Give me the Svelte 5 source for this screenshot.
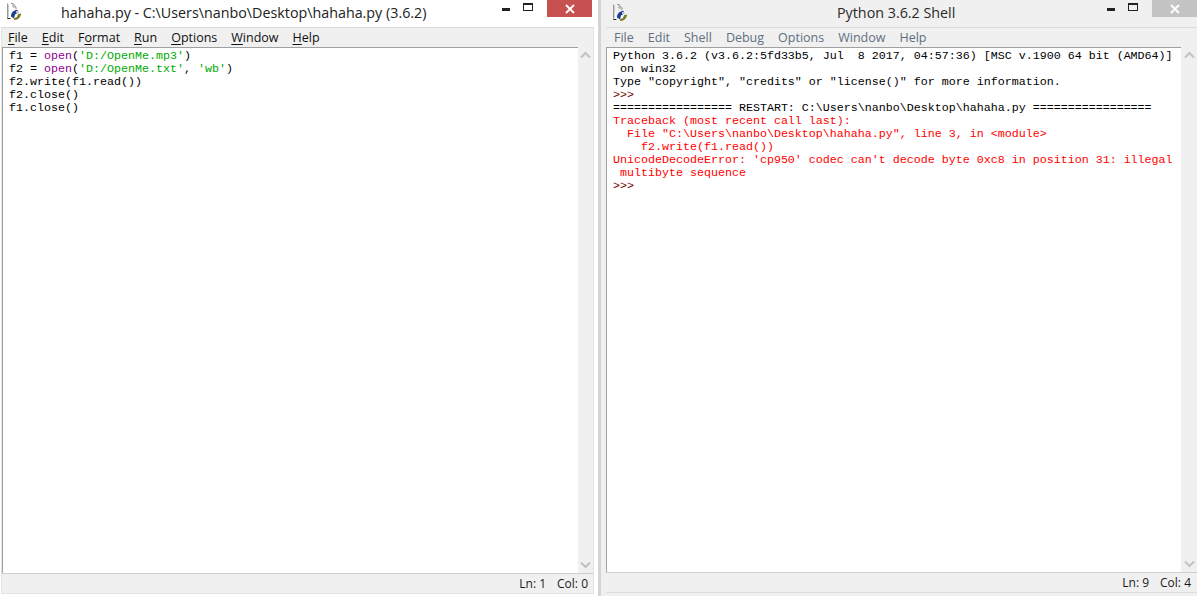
<script>
  const leftMenu = [['F','ile'],['E','dit'],['','F','o','rmat'],['R','un'],['O','ptions'],['W','indow'],['H','elp']];
  const rightMenu = ['File','Edit','Shell','Debug','Options','Window','Help'];
</script>

{#snippet icon()}
  <svg class="icon" width="20" height="20" viewBox="0 0 20 20" aria-hidden="true">
    <path d="M5.5 1.5V16.5H9M9 1.5H11L14 5V7.5M11 1.5V5H14" fill="#fff" stroke="#9a9a9a" stroke-width="1"/>
    <path d="M5.5 16.5H8" stroke="#222" fill="none"/>
    <path d="M6.5 2.5V15" stroke="#c9c9c9" fill="none"/>
    <circle cx="14" cy="13" r="5" fill="#fff"/>
    <path d="M9 14.5C9 10.5 11.5 8 15.5 8L16.5 10.5L13 12.5L12 16.5Z" fill="#1d3f8f"/>
    <path d="M19 11.5C19 15 16.5 18 12.5 18L11.5 16.5L15 15L16 12Z" fill="#7d7a21"/>
    <circle cx="15" cy="10" r="1" fill="#f3f3f3"/>
  </svg>
{/snippet}

{#snippet controls(cls)}
  <div class="controls {cls}">
    <span class="min"></span>
    <span class="max"></span>
    <span class="close">
      <svg width="10" height="10" viewBox="0 0 10 10" aria-hidden="true"><path d="M1 1L9 9M9 1L1 9" stroke="#fff" stroke-width="1.8"/></svg>
    </span>
  </div>
{/snippet}

{#snippet scrollbar()}
  <div class="scroll">
    <svg width="11" height="8" viewBox="0 0 11 8" aria-hidden="true"><path d="M1 6.5L5.5 2L10 6.5" fill="none" stroke="#c2c2c2" stroke-width="2"/></svg>
    <svg width="11" height="8" viewBox="0 0 11 8" aria-hidden="true"><path d="M1 1.5L5.5 6L10 1.5" fill="none" stroke="#c2c2c2" stroke-width="2"/></svg>
  </div>
{/snippet}

<div class="screen">
  <section class="win left">
    <header class="title">
      {@render icon()}
      <h1>hahaha.py - C:\Users\nanbo\Desktop\hahaha.py (3.6.2)</h1>
      {@render controls('active')}
    </header>
    <div class="frame">
      <nav class="menu">
        <span><u>F</u>ile</span>
        <span><u>E</u>dit</span>
        <span>F<u>o</u>rmat</span>
        <span><u>R</u>un</span>
        <span><u>O</u>ptions</span>
        <span><u>W</u>indow</span>
        <span><u>H</u>elp</span>
      </nav>
      <div class="body">
        <pre class="code">f1 = <b class="kw">open</b>(<b class="str">'D:/OpenMe.mp3'</b>)
f2 = <b class="kw">open</b>(<b class="str">'D:/OpenMe.txt'</b>, <b class="str">'wb'</b>)
f2.write(f1.read())
f2.close()
f1.close()</pre>
        {@render scrollbar()}
      </div>
      <footer class="status"><span>Ln: 1</span><span>Col: 0</span></footer>
    </div>
  </section>

  <div class="divider"></div>

  <section class="win right">
    <header class="title">
      {@render icon()}
      <h1>Python 3.6.2 Shell</h1>
      {@render controls('inactive')}
    </header>
    <div class="frame">
      <nav class="menu">
        {#each rightMenu as m}<span>{m}</span>{/each}
      </nav>
      <div class="body">
        <pre class="code">Python 3.6.2 (v3.6.2:5fd33b5, Jul  8 2017, 04:57:36) [MSC v.1900 64 bit (AMD64)]
 on win32
Type "copyright", "credits" or "license()" for more information.
<b class="prompt">&gt;&gt;&gt;</b>
================= RESTART: C:\Users\nanbo\Desktop\hahaha.py =================
<b class="err">Traceback (most recent call last):
  File "C:\Users\nanbo\Desktop\hahaha.py", line 3, in &lt;module&gt;
    f2.write(f1.read())
UnicodeDecodeError: 'cp950' codec can't decode byte 0xc8 in position 31: illegal
 multibyte sequence</b>
<b class="prompt">&gt;&gt;&gt;</b></pre>
        {@render scrollbar()}
      </div>
      <footer class="status"><span>Ln: 9</span><span>Col: 4</span></footer>
    </div>
  </section>
</div>

<style>
  :global(body) { margin: 0; background: #fff; }
  .screen {
    display: flex;
    width: 1197px;
    height: 596px;
    overflow: hidden;
    font-family: "Open Sans", "Noto Sans", sans-serif;
  }
  .win { display: flex; flex-direction: column; height: 596px; }
  .win.left { width: 598px; background: #fff; }
  .win.right { width: 596px; background: #f0f0f0; }
  .divider { width: 3px; background: #d4d4d4; }

  .title { display: flex; align-items: flex-start; height: 27px; flex: none; position: relative; }
  .icon { position: absolute; left: 2px; top: 2px; }
  .left .icon { left: 2px; }
  .right .icon { left: 7px; top: 3px; }
  h1 { margin: 0; font-weight: 400; font-size: 14.3px; line-height: 25px; white-space: nowrap; color: #222; }
  .left h1 { margin-left: 61px; }
  .right h1 { margin-left: 236px; color: #2b2b2b; }

  .controls { position: absolute; top: 0; display: flex; }
  .left .controls { right: 6px; }
  .right .controls { right: 0; }
  .controls span { display: block; position: relative; }
  .min { width: 27px; height: 20px; }
  .max { width: 27px; height: 20px; }
  .min::after { content: ""; position: absolute; left: 9px; top: 8px; width: 8px; height: 3px; background: #222; }
  .max::after { content: ""; position: absolute; left: 3px; top: 3px; width: 8px; height: 5px; border: 1px solid #222; border-top-width: 2px; }
  .close { width: 45px; height: 17px; background: #c75050; display: flex !important; align-items: center; justify-content: center; }
  .inactive .close { background: #c4c4c4; }

  .frame { flex: none; display: flex; flex-direction: column; height: 565px; }
  .left .frame { margin: 0 6px 0 1px; width: 591px; border: 1px solid #e4e4e4; border-top-color: #dcdcdc; }
  .right .frame { margin: 0 0 0 5px; border-top: 1px solid #dcdcdc; }
  .menu { display: flex; height: 19px; background: #f0f0f0; flex: none; font-size: 12.5px; line-height: 19px; color: #111; padding-left: 6px; }
  .menu span { display: block; }
  .left .menu span { margin-right: 14px; }
  .right .menu { color: #5f6f80; padding-left: 8px; }
  .right .menu span { margin-right: 14px; }
  u { text-underline-offset: 2px; text-decoration-thickness: 1px; }

  .body { flex: 1; min-height: 0; display: flex; }
  pre.code {
    flex: 1;
    margin: 0;
    padding: 2px 0 0 6px;
    background: #fff;
    border-top: 1px solid #a0a0a0;
    border-left: 1px solid #a0a0a0;
    font-family: "Liberation Mono", monospace;
    font-size: 11.67px;
    line-height: 13px;
    color: #000;
    overflow: hidden;
  }
  b { font-weight: 400; }
  .kw { color: #900090; }
  .str { color: #00aa00; }
  .prompt { color: #770000; }
  .err { color: #ff0000; }

  .scroll {
    flex: none;
    width: 16px;
    background: #f0f0f0;
    display: flex;
    flex-direction: column;
    justify-content: space-between;
    align-items: center;
    padding: 4px 0;
  }
  .left .scroll { width: 15px; }
  .status {
    flex: none;
    height: 19px;
    background: #f0f0f0;
    border-top: 1px solid #cfcfcf;
    display: flex;
    justify-content: flex-end;
    gap: 11px;
    padding-right: 5px;
    font-size: 12px;
    line-height: 20px;
    color: #1a1a1a;
  }
  .right .status { padding-right: 6px; border-bottom: 1px solid #dcdcdc; }
</style>
